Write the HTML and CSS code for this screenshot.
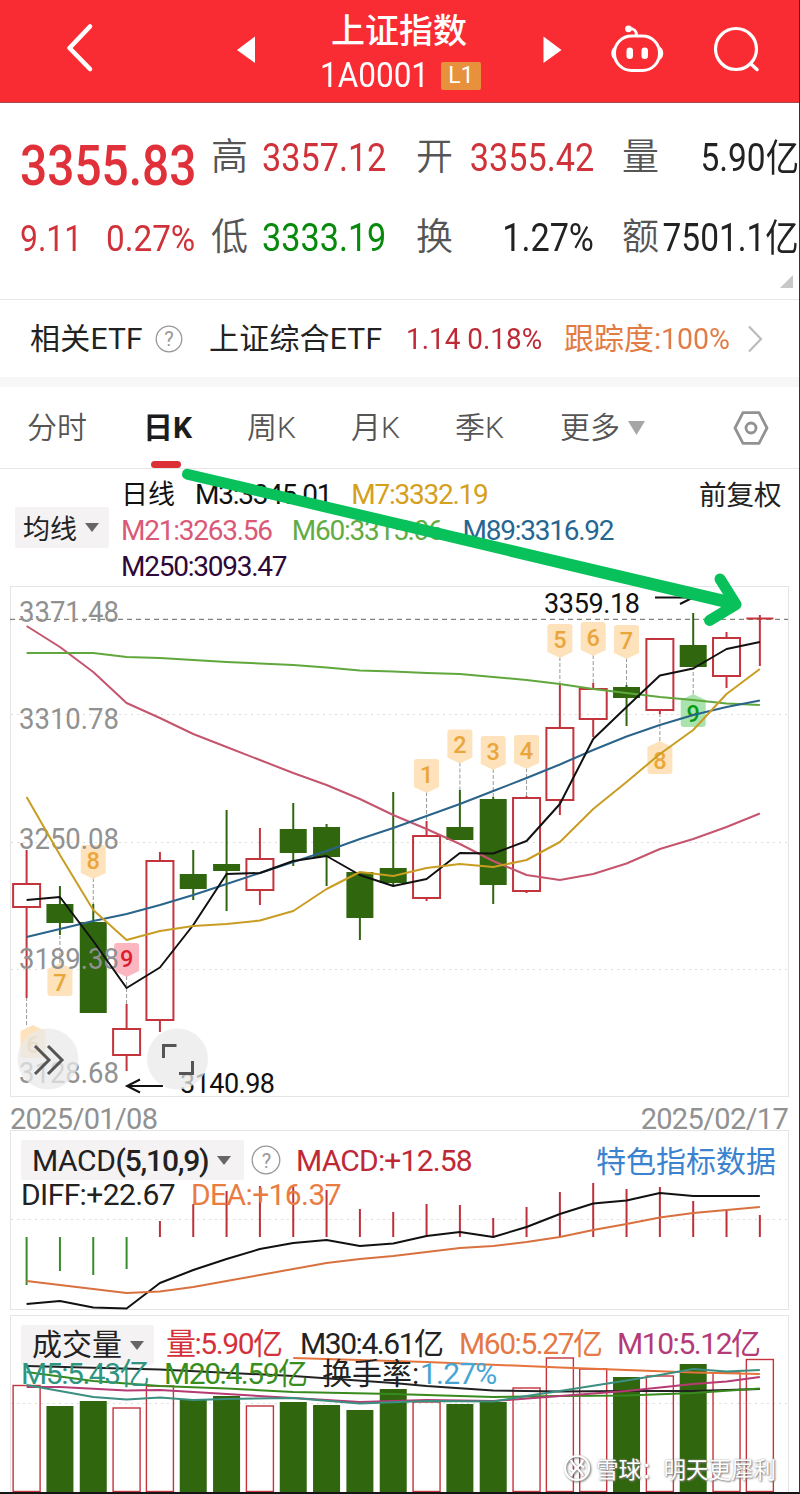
FILE: index.html
```html
<!DOCTYPE html>
<html lang="zh-CN">
<head>
<meta charset="utf-8">
<title>上证指数</title>
<link rel="stylesheet" href="styles.css">
</head>
<body>
<div class="app">
  <header class="header">
    <svg viewBox="0 0 160 102"><path class="ic" stroke-width="4.6" d="M90 26.500L69.500 48L90 69"/></svg>
    <svg viewBox="160 0 140 102"><path fill="#fff" d="M237 50L255 36.500V63z"/></svg>
    <div class="title">
      <div class="name">上证指数</div>
      <div class="code"><span>1A0001</span><b class="level">L1</b></div>
    </div>
    <svg viewBox="500 0 90 102"><path fill="#fff" d="M561.500 50L543.500 36.500V63z"/></svg>
    <svg viewBox="590 0 100 102">
      <rect class="ic" x="614.500" y="36" width="45" height="34.500" rx="17" stroke-width="3"/>
      <path class="ic" stroke-width="3" d="M636.500 35.500C636.500 30 634 28.500 628.500 28.500"/>
      <circle cx="628.500" cy="28.800" r="3.400" fill="#fff"/>
      <path fill="#fff" d="M615 46.500C610 49 610 57.500 615 60zM659.500 46.500C664.500 49 664.500 57.500 659.500 60z"/>
      <rect x="626.500" y="47.500" width="6.500" height="11.500" rx="3.200" fill="#fff"/><rect x="641.500" y="47.500" width="6.500" height="11.500" rx="3.200" fill="#fff"/>
    </svg>
    <svg viewBox="690 0 109 102"><circle class="ic" cx="736" cy="49" r="20.500" stroke-width="3.200"/><path class="ic" stroke-width="3.500" d="M751 64L757 69.500"/></svg>
  </header>

  <section class="quote">
    <div class="price red">3355.83</div>
    <div class="label">高</div><div class="val red">3357.12</div>
    <div class="label">开</div><div class="val end red">3355.42</div>
    <div class="label">量</div><div class="val edge">5.90亿</div>
    <div class="change red"><span class="diff-v">9.11</span><span class="pct">0.27%</span></div>
    <div class="label">低</div><div class="val green">3333.19</div>
    <div class="label">换</div><div class="val end">1.27%</div>
    <div class="label">额</div><div class="val edge">7501.1亿</div>
    <svg class="corner" viewBox="0 0 13 13"><path fill="#c8c8c8" d="M13 0V13H0z"/></svg>
  </section>

  <section class="etf">
    <span class="etf-head">相关ETF</span>
    <svg class="help" viewBox="0 0 28 28"><circle cx="14" cy="14" r="12.800"/><text x="14" y="21" text-anchor="middle">?</text></svg>
    <span class="etf-name">上证综合ETF</span>
    <span class="etf-num"><span class="squeeze">1.14 0.18%</span></span>
    <span class="etf-track">跟踪度:<span class="squeeze wide">100%</span></span>
    <svg class="chev" viewBox="0 0 16 28"><path d="M2 1.500L14 14L2 26.500"/></svg>
  </section>

  <nav class="tabs">
    <span class="tab">分时</span><span class="tab on">日K</span><span class="tab">周K</span><span class="tab">月K</span><span class="tab">季K</span>
    <span class="tab more">更多<svg viewBox="0 0 17 14"><path fill="#a6a6a6" d="M0 0H17L8.500 14z"/></svg></span>
    <svg class="gear" viewBox="0 0 36 34"><path d="M10 1.700H26L34 17L26 32.300H10L2 17z"/><circle cx="18" cy="17" r="5"/></svg>
  </nav>

  <section class="ma">
    <div class="pick">均线<svg viewBox="0 0 14 9"><path d="M0 0H14L7 9z"/></svg></div>
    <div class="ma-lines">
      <div><span class="kx">日线</span><span>M3:3345.01</span><span class="c7">M7:3332.19</span></div>
      <div><span class="c21">M21:3263.56</span><span class="c60">M60:3315.06</span><span class="c89">M89:3316.92</span></div>
      <div><span class="c250">M250:3093.47</span></div>
    </div>
    <div class="adj">前复权</div>
  </section>

  <svg id="kline" class="plot kline" viewBox="0 586 799 512"></svg>
  <div class="dates"><span>2025/01/08</span><span>2025/02/17</span></div>

  <section class="panel macd">
    <svg id="macd" class="plot" viewBox="0 1130 799 180"></svg>
    <div class="legend">
      <div class="row one">
        <span class="pick2">MACD<i>(5,10,9)</i><svg viewBox="0 0 14 9"><path d="M0 0H14L7 9z"/></svg></span>
        <svg class="help big" viewBox="0 0 30 30"><circle cx="15" cy="15" r="13.800"/><text x="15" y="22.500" text-anchor="middle">?</text></svg>
        <span class="macd-v">MACD:+12.58</span>
        <span class="special">特色指标数据</span>
      </div>
      <div class="row two"><span class="diff">DIFF:+22.67</span><span class="dea">DEA:+16.37</span></div>
    </div>
  </section>

  <section class="panel volume">
    <svg id="volume" class="plot" viewBox="0 1310 799 183"></svg>
    <div class="legend">
      <div class="row one">
        <span class="pick2">成交量<svg viewBox="0 0 14 9"><path d="M0 0H14L7 9z"/></svg></span>
        <span class="v0">量:5.90亿</span><span class="v30">M30:4.61亿</span><span class="v60">M60:5.27亿</span><span class="v10">M10:5.12亿</span>
      </div>
      <div class="row two"><span class="v5">M5:5.43亿</span><span class="v20">M20:4.59亿</span><span class="turn">换手率:</span><span class="turn-v">1.27%</span></div>
    </div>
    <div class="mark">
      <svg viewBox="0 0 28 28"><circle cx="14" cy="14" r="12"/><path d="M8 6C10 12 18 16 20 22M20 6C18 12 10 16 8 22M7 14L11 18M17 10L21 14"/></svg>
      <span>雪球：明天更犀利</span>
    </div>
  </section>

  <svg class="pointer" viewBox="0 0 799 1494">
    <path class="shaft" d="M187.500 468.800L734 597L732 609.500L186 479.400A5.400 5.400 0 0 1 187.500 468.800z"/>
    <path class="head" d="M720 579L736 604.500L709.500 620.500"/>
  </svg>
</div>
<script src="chart.js"></script>
</body>
</html>
```
FILE: styles.css
```css
* { box-sizing: border-box; }
body { margin: 0; background: #fff; font-family: Roboto, "Noto Sans CJK SC", sans-serif; color: #222; }
.app { position: relative; width: 800px; height: 1494px; border-right: 1px solid #333; border-bottom: 2px solid #161616; overflow: hidden; white-space: nowrap; }
svg { display: block; flex: none; }
.red { color: #d0323a; }
.green { color: #078a0c; }

.header { display: grid; grid-template-columns: 160px 140px 200px 90px 100px 109px; height: 103px; background: #fa2c33; border-bottom: 1px solid #a54a4c; color: #fff; }
.ic { fill: none; stroke: #fff; stroke-linecap: round; stroke-linejoin: round; }
.title { padding-top: 11px; }
.name { font-size: 34px; line-height: 40px; text-align: center; font-weight: 500; padding-right: 2px; }
.code { display: flex; align-items: center; gap: 13px; height: 50px; padding-left: 20px; font-size: 35px; }
.code span { width: 108px; line-height: 50px; transform: scaleX(.9); transform-origin: left; }
.level { width: 40px; height: 28px; border-radius: 2px; background: #e8913c; font-size: 23px; line-height: 28px; font-weight: 400; text-align: center; }

.quote { position: relative; display: grid; grid-template-columns: 191px 51px 154px 52px 154px 42px minmax(0, 1fr); grid-template-rows: 80px 80px; height: 197px; padding: 15px 0 0 20px; border-bottom: 1px solid #e6e6e6; line-height: 80px; }
.price { font-size: 55px; font-weight: 500; line-height: 96px; color: #e0313a; transform: scaleX(.87); transform-origin: left; }
.label { font-size: 37px; color: #555; font-weight: 350; }
.val { font-size: 38px; transform: scaleX(.9); transform-origin: left; }
.end { justify-self: end; margin-right: 28px; transform-origin: right; }
.edge { justify-self: end; transform-origin: right; transform: scaleX(.88); }
.change { display: flex; justify-content: space-between; padding-right: 16px; font-size: 37px; line-height: 82px; }
.diff-v { transform: scaleX(.86); transform-origin: left; }
.pct { transform: scaleX(.9); transform-origin: right; }
.corner { position: absolute; right: 6px; bottom: 11px; width: 13px; height: 13px; }

.etf { display: flex; align-items: center; height: 87px; padding: 0 0 0 30px; border-bottom: 10px solid #f7f7f7; font-size: 30px; line-height: 40px; }
.etf-head { width: 125px; letter-spacing: .2px; }
.help { width: 28px; height: 28px; fill: none; stroke: #999; stroke-width: 1.300; }
.help text { font-size: 20px; fill: #999; stroke: none; }
.etf-name { margin-left: 26px; width: 197px; letter-spacing: .2px; }
.etf-num { width: 158px; color: #bd2a36; }
.squeeze { display: inline-block; transform: scaleX(.93); transform-origin: left; }
.wide { transform: scaleX(.95); }
.etf-track { width: 183px; color: #e27c45; }
.chev { width: 16px; height: 28px; fill: none; stroke: #bbb; stroke-width: 2.200; }

.tabs { display: grid; grid-template-columns: 118px 102px 104px 104px 105px 173px 36px; align-items: center; height: 82px; padding-left: 27px; border-bottom: 1px solid #e6e6e6; font-size: 30px; line-height: 81px; color: #555; }
.tab { font-weight: 350; }
.on { position: relative; left: -2px; color: #1c1c1c; font-weight: 700; }
.on::after { content: ""; position: absolute; left: 8px; bottom: 0; width: 30px; height: 7px; border-radius: 4px; background: #dc3036; }
.more { display: flex; align-items: center; gap: 8px; }
.more svg { width: 17px; height: 14px; }
.gear { width: 36px; height: 34px; fill: none; stroke: #929292; stroke-width: 2.800; stroke-linejoin: round; }

.ma { display: grid; grid-template-columns: 94px 1fr 100px; column-gap: 13px; height: 117px; padding: 8px 0 0 15px; }
.pick { display: flex; align-items: center; gap: 8px; height: 41px; margin-top: 30px; padding-left: 8px; border-radius: 2px; background: #f5f2f4; font-size: 27px; }
.pick svg, .pick2 svg { width: 14px; height: 9px; fill: #666; }
.ma-lines { margin-left: -1px; font-size: 28px; line-height: 36px; letter-spacing: -1.250px; color: #111; }
.ma-lines div { display: flex; gap: 20px; }
.ma-lines .kx { font-size: 27px; letter-spacing: 0; }
.c7 { color: #d5a01c; } .c21 { color: #da5977; } .c60 { color: #62ac45; } .c89 { color: #266792; } .c250 { color: #2d0838; }
.adj { font-size: 27.500px; line-height: 37px; }

.plot { width: 799px; }
.kline { height: 512px; }
.dates { display: flex; justify-content: space-between; height: 32px; padding: 0 11px 0 10px; font-size: 29px; line-height: 42px; letter-spacing: -.7px; color: #919191; }
.panel { display: grid; }
.panel > * { grid-area: 1 / 1; }
.macd { height: 180px; }
.volume { height: 182px; }
.legend { z-index: 1; }
.row { display: flex; align-items: center; font-size: 30px; letter-spacing: -.8px; }
.pick2 { display: flex; align-items: center; height: 40px; padding-left: 11px; background: #f5f2f4; border-radius: 2px; }
.macd .one { height: 40px; margin: 10px 0 0 21px; }
.macd .pick2 { width: 223px; letter-spacing: -.4px; }
.macd .pick2 i { font-style: normal; font-weight: 500; width: 96px; letter-spacing: -1.200px; }
.macd .pick2 svg { margin-left: 6px; }
.big { width: 30px; height: 30px; margin-left: 7px; }
.macd-v { width: 315px; padding-left: 15px; color: #bf2936; }
.special { margin-top: -3px; color: #3b83cf; letter-spacing: 0; }
.macd .two { height: 28px; padding-left: 21px; letter-spacing: -.6px; }
.diff { width: 170px; } .dea { color: #ea7c41; }
.volume .one { height: 40px; margin: 15px 0 0 21px; letter-spacing: -1.450px; }
.volume .pick2 { width: 133px; letter-spacing: 0; line-height: 32px; }
.volume .pick2 svg { margin: 0 0 0 8px; }
.volume .one > span:not(.pick2) { margin-top: -9px; }
.v0 { width: 134px; padding-left: 12px; color: #d5313a; }
.v30, .v60 { width: 159px; padding-left: 12px; }
.v60 { color: #e57845; } .v10 { padding-left: 11px; color: #b43a78; }
.volume .two { height: 24px; line-height: 24px; padding-left: 21px; margin-top: -3px; letter-spacing: -1.450px; }
.v5 { width: 143px; color: #2e9580; } .v20 { width: 158px; color: #388f20; }
.turn { width: 98px; letter-spacing: 0; } .turn-v { color: #46a5d4; letter-spacing: -.8px; }
.mark { z-index: 2; align-self: end; display: flex; align-items: center; gap: 5px; height: 28px; margin: 0 0 10px 563px; color: #fff; font-size: 22.500px; text-shadow: 1px 1px 2px #777, 0 0 2px #aaa; }
.mark svg { width: 28px; height: 28px; fill: none; stroke: #fff; stroke-width: 2.200; filter: drop-shadow(1px 1px 1px #666); }
.pointer { position: absolute; left: 0; top: 0; width: 799px; height: 1494px; z-index: 5; pointer-events: none; }
.shaft { fill: #08c15b; }
.head { fill: none; stroke: #08c15b; stroke-width: 11; stroke-linecap: round; stroke-linejoin: round; }

.frame { fill: none; stroke: #e5e5e8; }
.grid { stroke: #dedede; stroke-dasharray: 2 4; }
.last { stroke: #83837c; stroke-dasharray: 5 4; stroke-width: 1.200; }
.up { fill: none; stroke: #c4343c; stroke-width: 2; }
.down { fill: #2f660e; stroke: #2f660e; stroke-width: 2; }
.thin { stroke-width: 1.400; }
.ma-line { fill: none; stroke-width: 2; stroke-linejoin: round; }
.axis { font-size: 29px; fill: #919191; }
.peak { font-size: 27px; fill: #111; }
.leader { stroke: #999; stroke-width: 1; stroke-dasharray: 4 2; }
.badge-t { font-size: 23.500px; text-anchor: middle; font-weight: 500; }
.arrow { fill: none; stroke: #111; stroke-width: 2; }
.disc { fill: #e9e9e9; fill-opacity: .75; }
.glyph { fill: none; stroke: #555; stroke-width: 3; }
```
FILE: chart.js
```javascript
const NS = 'http://www.w3.org/2000/svg';
const X = i => 26.6 + 33.33 * i;

function add(svg, tag, attrs, text) {
  const el = document.createElementNS(NS, tag);
  for (const k in attrs) el.setAttribute(k, attrs[k]);
  if (text) el.textContent = text;
  svg.appendChild(el);
}
function line(svg, cls, x1, y1, x2, y2) { add(svg, 'line', { class: cls, x1, y1, x2, y2 }); }
function series(svg, color, points) {
  add(svg, 'polyline', { class: 'ma-line', stroke: color, points: points.map(p => X(p[0]) + ',' + p[1]).join(' ') });
}
const each = values => values.map((v, i) => [i, v]);

// price chart
const k = document.getElementById('kline');
add(k, 'rect', { class: 'frame', x: 10.5, y: 586.5, width: 778, height: 510 });
[714.5, 842.5, 969.5].forEach(y => line(k, 'grid', 11, y, 788, y));
line(k, 'last', 10, 619.3, 788, 619.3);

// badges: index, digit, box top, leader end, direction, fill, ink
const O = ['#fde2bb', '#eaa63a'];
const badges = [
  [0, 6, 1029, 998, -1, '#fde2bb', '#efb873'], [1, 7, 967, 936, -1, ...O], [2, 8, 845, 904, 1, ...O],
  [3, 9, 943, 1004, 1, '#fbb6c0', '#d9202e'], [12, 1, 759, 821, 1, ...O], [13, 2, 729.5, 790, 1, ...O],
  [14, 3, 736, 797, 1, ...O], [15, 4, 735, 796, 1, ...O], [16, 5, 624, 684, 1, ...O], [17, 6, 622, 683, 1, ...O],
  [18, 7, 625, 685, 1, ...O], [19, 8, 745, 714, -1, ...O], [20, 9, 698, 668, -1, '#a9e4ae', '#059a12']
];
for (const [i, n, y, end, dir, bg, ink] of badges) {
  const x = Math.max(X(i), 33), l = x - 12.5, r = x + 12.5, b = y + 29;
  line(k, 'leader', X(i), dir > 0 ? b + 4 : y - 4, X(i), end);
  const d = dir > 0
    ? `M${l + 3} ${y}H${r - 3}Q${r} ${y} ${r} ${y + 3}V${b - 1}L${x + 4} ${b + 3}L${x} ${b + 5}L${x - 4} ${b + 3}L${l} ${b - 1}V${y + 3}Q${l} ${y} ${l + 3} ${y}z`
    : `M${l + 3} ${b}H${r - 3}Q${r} ${b} ${r} ${b - 3}V${y + 2}L${x + 4} ${y - 2}L${x} ${y - 4}L${x - 4} ${y - 2}L${l} ${y + 2}V${b - 3}Q${l} ${b} ${l + 3} ${b}z`;
  add(k, 'path', { d, fill: bg });
  add(k, 'text', { class: 'badge-t', x, y: y + 23.5, fill: ink }, String(n));
}

// candles: rising flag, high, body top, body bottom, low
const candles = [
  [1, 850, 884, 907, 998], [0, 886, 904, 923, 935], [0, 904, 922, 1013, 1013], [1, 1004, 1029, 1055, 1071],
  [1, 852, 861, 1020, 1032], [0, 850, 874, 889, 900], [0, 810, 864, 871, 911], [1, 828, 859, 890, 905],
  [0, 803, 829, 853, 866], [0, 824, 827, 857, 886], [0, 872, 872, 918, 940], [0, 792, 868, 883, 886],
  [1, 821, 836, 898, 901], [0, 790, 827, 840, 840], [0, 797, 799, 885, 904], [1, 796, 798, 891, 893],
  [1, 684, 728, 800, 815], [1, 683, 689, 719, 737], [0, 685, 687, 698, 726], [1, 639, 639, 710, 714],
  [0, 613, 645, 667, 667], [1, 632, 638, 676, 688], [1, 615, 618.5, 618.5, 666]
];
candles.forEach(([up, h, t, b, l], i) => {
  const x = X(i), c = up ? 'up' : 'down';
  line(k, c, x, h, x, t);
  line(k, c, x, b, x, l);
  if (t === b) line(k, c, x - 13.5, t, x + 13.5, t);
  else if (up) add(k, 'rect', { class: c, x: x - 13.5, y: t, width: 27, height: b - t });
  else add(k, 'rect', { class: c, x: x - 12.5, y: t + 1, width: 25, height: b - t - 2 });
});

const axis = [['3371.48', 622], ['3310.78', 728.5], ['3250.08', 849], ['3189.38', 969], ['3128.68', 1082.5]];
axis.forEach(([t, y]) => add(k, 'text', { class: 'axis', x: 19, y, textLength: 100, lengthAdjust: 'spacingAndGlyphs' }, t));

series(k, '#c5546e', each([626, 647, 672, 703, 718, 734, 747, 760, 773, 785, 799, 815, 829, 844, 861, 875, 880, 874, 863.5, 849, 839, 827, 813.5]));
series(k, '#60a83d', each([653, 653, 653, 657, 658, 660, 662, 663.5, 665, 667.5, 670.5, 671.5, 673, 674, 677, 680, 684, 689, 693, 697, 700, 703.5, 705]));
series(k, '#2a648b', each([937, 929, 921, 914, 905, 895, 884, 873, 862, 851, 839, 828, 816, 804, 791, 778, 764.5, 750, 736.5, 725, 715, 707, 700.5]));
series(k, '#111', each([900, 897, 941, 988, 967.5, 925, 874, 873, 861, 856, 875, 886, 879, 853, 853.5, 841, 804, 739, 707, 675.5, 668.5, 649, 642]));
series(k, '#c99d22', each([797, 855, 910, 940, 931, 926, 924, 920.5, 911, 889, 872, 876, 868, 864, 867, 860, 842, 809, 782, 754, 730, 694, 669]));

add(k, 'text', { class: 'peak', x: 544, y: 612.5, textLength: 96 }, '3359.18');
add(k, 'path', { class: 'arrow', d: 'M655 597.500H692M680 604L693 597.500' });
add(k, 'text', { class: 'peak', x: 180, y: 1093, textLength: 95 }, '3140.98');
add(k, 'path', { class: 'arrow', d: 'M163 1086H127M140 1079.500L127 1086L140 1092.500' });
add(k, 'circle', { class: 'disc', cx: 48, cy: 1059, r: 30.5 });
add(k, 'circle', { class: 'disc', cx: 177.5, cy: 1059, r: 30.5 });
add(k, 'path', { class: 'glyph', d: 'M35 1046L49 1060L35 1074M48 1046L62 1060L48 1074' });
add(k, 'path', { class: 'glyph', d: 'M163.500 1058V1045.500H176.500M192.500 1061V1073.500H179' });

// MACD
const m = document.getElementById('macd');
add(m, 'rect', { class: 'frame', x: 10.5, y: 1130.5, width: 778, height: 179 });
line(m, 'grid', 11, 1219.5, 788, 1219.5);
[1285, 1271, 1275, 1269, 1221, 1204, 1191, 1186, 1187, 1190, 1209, 1212, 1204, 1205, 1218, 1207, 1192, 1183, 1189, 1187, 1201, 1209, 1215].forEach((y, i) => {
  add(m, 'line', { x1: X(i), x2: X(i), y1: 1237, y2: y, stroke: y > 1237 ? '#378a2d' : '#bd3039', 'stroke-width': 2 });
});
series(m, '#111', each([1304, 1301, 1307.5, 1308.5, 1283, 1270, 1259, 1249, 1243, 1240, 1246, 1243.5, 1236, 1232, 1237, 1227, 1214, 1203.5, 1200.5, 1193, 1196, 1196, 1196]));
series(m, '#d9713f', each([1281, 1285, 1289, 1293, 1291.5, 1287, 1281, 1275, 1269, 1263, 1259, 1256, 1252, 1248, 1246, 1242, 1237, 1230, 1224, 1217.5, 1213, 1210, 1207]));

// volume
const v = document.getElementById('volume');
add(v, 'rect', { class: 'frame', x: 10.5, y: 1315.5, width: 778, height: 190 });
line(v, 'grid', 11, 1403.5, 788, 1403.5);
[1385.5, 1406, 1401, 1408, 1386, 1400, 1396, 1406, 1402, 1405, 1410, 1389, 1402, 1404, 1402, 1388, 1358, 1369, 1377, 1376, 1364, 1373, 1359.5].forEach((y, i) => {
  const up = candles[i][0];
  add(v, 'rect', up
    ? { class: 'up thin', x: X(i) - 13.5, y, width: 27, height: 1491.5 - y }
    : { class: 'down', x: X(i) - 12.5, y: y + 1, width: 25, height: 1491 - y });
});
series(v, '#222', [[0, 1366], [4, 1369.5], [8, 1376], [11, 1383], [12, 1386], [14, 1390.5], [16, 1391.5], [18, 1391], [20, 1391], [22, 1389]]);
series(v, '#e5733c', [[8, 1358], [12, 1362], [16, 1367.5], [18, 1370], [20, 1372.5], [22, 1374]]);
series(v, '#388a1e', [[0, 1372], [2, 1381], [4, 1386], [6, 1388.5], [8, 1392], [11, 1394], [14, 1397], [16, 1396], [18, 1395.5], [20, 1393], [22, 1388.5]]);
series(v, '#b63a73', [[0, 1387], [1, 1387], [3, 1390.5], [4, 1390], [6, 1394], [8, 1398], [10, 1402], [12, 1400], [14, 1401], [16, 1396], [18, 1391], [20, 1384], [21, 1381.5], [22, 1377]]);
series(v, '#3a8f80', [[0, 1385], [1, 1391], [2, 1397], [3, 1399.5], [4, 1397.5], [5, 1400], [6, 1399], [8, 1398], [10, 1403.5], [12, 1401], [14, 1401.5], [15, 1396], [16, 1391], [18, 1380.5], [19, 1375], [20, 1369], [21, 1371.5], [22, 1370]]);
```
